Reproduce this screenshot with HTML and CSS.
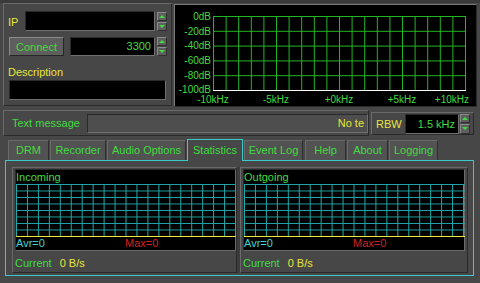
FILE: index.html
```html
<!DOCTYPE html>
<html>
<head>
<meta charset="utf-8">
<link rel="stylesheet" href="styles.css">
</head>
<body>
<div class="app">
  <div class="top">
    <div class="left">
      <div class="row r1">
        <span class="lbl yellow ip">IP</span>
        <div class="field w130"></div>
        <div class="spin"><span class="up"></span><span class="dn"></span></div>
      </div>
      <div class="row r2">
        <button class="btn">Connect</button>
        <div class="field w85 num">3300</div>
        <div class="spin"><span class="up"></span><span class="dn"></span></div>
      </div>
      <div class="lbl yellow desc">Description</div>
      <div class="field descf"></div>
    </div>
    <div class="spectrum">
      <svg width="301" height="101" viewBox="0 0 301 101">
        <defs>
          <pattern id="sg" x="38" y="11" width="12.6" height="14.8" patternUnits="userSpaceOnUse">
            <path d="M0.5 0 V14.8 M0 0.5 H12.6" stroke="#22b822" stroke-width="1" fill="none"/>
          </pattern>
        </defs>
        <rect x="38" y="11" width="252" height="74" fill="url(#sg)"/>
        <path d="M290.5 11 V85" stroke="#22b822"/>
        <path d="M38 85.5 H291" stroke="#ffffff"/>
        <g class="ylab" text-anchor="end">
          <text x="36" y="15">0dB</text>
          <text x="36" y="30">-20dB</text>
          <text x="36" y="44">-40dB</text>
          <text x="36" y="59">-60dB</text>
          <text x="36" y="74">-80dB</text>
          <text x="36" y="88">-100dB</text>
        </g>
        <g class="ylab" text-anchor="middle">
          <text x="38" y="98">-10kHz</text>
          <text x="101" y="98">-5kHz</text>
          <text x="164" y="98">+0kHz</text>
          <text x="227" y="98">+5kHz</text>
          <text x="294" y="98" text-anchor="end">+10kHz</text>
        </g>
      </svg>
    </div>
  </div>

  <div class="msgrow">
    <div class="msggroup">
      <span class="green msglbl">Text message</span>
      <div class="msgfield"><span class="yellow">No te</span></div>
    </div>
    <div class="rbwgroup">
      <span class="yellow rbwlbl">RBW</span>
      <div class="field rbwf">1.5 kHz</div>
      <div class="spin tall"><span class="up"></span><span class="dn"></span></div>
    </div>
  </div>

  <div class="tabs">
    <div class="tab t1">DRM</div>
    <div class="tab t2">Recorder</div>
    <div class="tab t3">Audio Options</div>
    <div class="tab t4 active">Statistics</div>
    <div class="tab t5">Event Log</div>
    <div class="tab t6">Help</div>
    <div class="tab t7">About</div>
    <div class="tab t8">Logging</div>
  </div>

  <div class="panel">
    <div class="group g1">
      <div class="scope">
        <div class="green cap">Incoming</div>
        <svg class="grid" width="220" height="53" viewBox="0 0 220 53">
          <defs>
            <pattern id="cg1" x="0" y="0" width="10.95" height="6.5" patternUnits="userSpaceOnUse">
              <path d="M0.5 0 V6.5 M0 0.5 H10.95" stroke="#1fa8a8" fill="none"/>
            </pattern>
          </defs>
          <rect x="0" y="0" width="220" height="52" fill="url(#cg1)"/>
          <path d="M0 52.5 H220" stroke="#e8e840"/>
        </svg>
        <div class="stat"><span class="cyan">Avr=0</span><span class="red max1">Max=0</span></div>
      </div>
      <div class="cur"><span class="green">Current</span><span class="yellow val">0 B/s</span></div>
    </div>
    <div class="sep"></div>
    <div class="group g2">
      <div class="scope">
        <div class="green cap">Outgoing</div>
        <svg class="grid" width="221" height="53" viewBox="0 0 221 53">
          <defs>
            <pattern id="cg2" x="0" y="0" width="10.95" height="6.5" patternUnits="userSpaceOnUse">
              <path d="M0.5 0 V6.5 M0 0.5 H10.95" stroke="#1fa8a8" fill="none"/>
            </pattern>
          </defs>
          <rect x="0" y="0" width="221" height="52" fill="url(#cg2)"/>
          <path d="M0 52.5 H221" stroke="#e8e840"/>
        </svg>
        <div class="stat"><span class="cyan">Avr=0</span><span class="red max2">Max=0</span></div>
      </div>
      <div class="cur"><span class="green">Current</span><span class="yellow val">0 B/s</span></div>
    </div>
  </div>
</div>
</body>
</html>
```

FILE: styles.css
```css
* { box-sizing: border-box; }
html, body { margin: 0; padding: 0; }
body {
  width: 480px;
  height: 283px;
  overflow: hidden;
  background: #474747;
  font-family: "Liberation Sans", Arial, sans-serif;
  font-size: 11px;
  color: #40dc40;
}
.app {
  width: 480px;
  height: 283px;
  border-top: 3px solid #3a3a3a;
  position: relative;
}
.green { color: #40dc40; }
.yellow { color: #e6e63c; }
.cyan { color: #40d0d0; }
.red { color: #d42020; }

/* top area */
.top {
  display: flex;
  height: 105px;
  padding: 0 3px 0 3px;
  gap: 2px;
}
.left {
  width: 169px;
  height: 103px;
  border: 1px solid;
  border-color: #6a6a6a #2a2a2a #2a2a2a #6a6a6a;
  padding: 7px 0 0 4px;
}
.row { display: flex; align-items: center; }
.r1 { height: 20px; }
.ip { width: 17px; padding-top: 2px; }
.lbl { font-size: 11px; }
.field {
  background: #000;
  border: 1px solid;
  border-color: #2a2a2a #707070 #707070 #2a2a2a;
  height: 20px;
}
.w130 { width: 130px; margin-right: 2px; }
.w85 { width: 85px; margin-right: 2px; height: 19px; }
.num {
  text-align: right;
  padding-right: 3px;
  line-height: 17px;
  font-size: 11px;
  color: #40dc40;
}
.spin {
  width: 10px;
  height: 19px;
  display: flex;
  flex-direction: column;
  gap: 1px;
}
.spin span {
  flex: 1;
  background: #5e5e5e;
  border: 1px solid;
  border-color: #8a8a8a #2e2e2e #2e2e2e #8a8a8a;
  position: relative;
}
.spin .up::after, .spin .dn::after {
  content: "";
  position: absolute;
  left: 1px;
  top: 2px;
  border-left: 3px solid transparent;
  border-right: 3px solid transparent;
}
.spin .up::after { border-bottom: 3px solid #40dc40; }
.spin .dn::after { border-top: 3px solid #40dc40; }
.spin.tall { height: 20px; }
.r2 { margin-top: 6px; height: 19px; }
.btn {
  margin: 0 6px 0 1px;
  width: 55px;
  height: 19px;
  background: #5e5e5e;
  border: 1px solid;
  border-color: #8a8a8a #262626 #262626 #8a8a8a;
  color: #40dc40;
  font-family: "Liberation Sans", Arial, sans-serif;
  font-size: 11px;
  padding: 0;
}
.desc { margin-top: 10px; height: 14px; font-size: 11px; }
.descf { width: 157px; margin: 0 0 0 1px; }

.spectrum {
  margin-top: 1px;
  width: 303px;
  height: 103px;
  background: #000;
  border: 1px solid;
  border-color: #7a7a7a #2a2a2a #2a2a2a #7a7a7a;
}
.spectrum svg { display: block; }
.ylab text {
  fill: #40dc40;
  font-family: "Liberation Sans", Arial, sans-serif;
  font-size: 10px;
}

/* message row */
.msgrow {
  display: flex;
  height: 28px;
  padding: 2px 0 0 3px;
  gap: 2px;
}
.msggroup {
  width: 366px;
  height: 26px;
  border: 1px solid;
  border-color: #6a6a6a #2a2a2a #2a2a2a #6a6a6a;
  display: flex;
  align-items: center;
  padding-left: 8px;
}
.msglbl { width: 75px; font-size: 11px; }
.msgfield {
  width: 283px;
  height: 19px;
  background: #4e4e4e;
  border: 1px solid;
  border-color: #2a2a2a #707070 #707070 #2a2a2a;
  text-align: right;
  line-height: 17px;
  padding-right: 3px;
  font-size: 11px;
  margin-top: 1px;
}
.rbwgroup {
  margin-top: 2px;
  width: 103px;
  height: 23px;
  border: 1px solid;
  border-color: #6a6a6a #2a2a2a #2a2a2a #6a6a6a;
  display: flex;
  align-items: center;
  padding-left: 4px;
}
.rbwlbl { width: 29px; font-size: 11px; }
.rbwf {
  width: 54px;
  height: 20px;
  margin-right: 1px;
  text-align: right;
  padding-right: 3px;
  line-height: 18px;
  font-size: 11px;
  color: #40dc40;
}

/* tabs */
.tabs {
  display: flex;
  align-items: flex-end;
  height: 24px;
  padding-left: 8px;
}
.tab {
  height: 20px;
  background: #525252;
  border: 1px solid;
  border-bottom: none;
  border-color: #6a6a6a #2e2e2e #2e2e2e #6a6a6a;
  color: #40dc40;
  text-align: center;
  line-height: 19px;
  font-size: 11px;
  margin-right: 1px;
}
.t1 { width: 41px; }
.t2 { width: 56px; }
.t3 { width: 79px; }
.t4 { width: 56px; }
.t5 { width: 59px; margin-left: 0; }
.t6 { width: 41px; margin-left: 1px; }
.t7 { width: 41px; }
.t8 { width: 49px; }
.tab.active {
  height: 22px;
  background: #474747;
  border: 1px solid #3cc8c8;
  border-bottom: none;
  line-height: 21px;
  position: relative;
  top: 1px;
  z-index: 2;
}

/* panel */
.panel {
  margin-left: 5px;
  width: 469px;
  height: 116px;
  border: 1px solid #3cc8c8;
  display: flex;
  padding: 6px 0 0 6px;
}
.group {
  height: 106px;
  border: 1px solid;
  border-color: #6a6a6a #2a2a2a #2a2a2a #6a6a6a;
  padding: 1px 0 0 2px;
}
.g1 { width: 225px; }
.g2 { width: 228px; }
.sep {
  width: 3px;
  height: 106px;
  background: #3c3c3c;
}
.scope {
  background: #000;
  height: 82px;
  border: 1px solid;
  border-color: #2a2a2a #6a6a6a #6a6a6a #2a2a2a;
}
.g1 .scope { width: 221px; }
.g2 .scope { width: 222px; }
.cap { height: 14px; line-height: 15px; font-size: 11px; }
.grid { display: block; }
.stat { height: 13px; line-height: 13px; font-size: 11px; position: relative; }
.max1 { position: absolute; left: 109px; }
.max2 { position: absolute; left: 109px; }
.cur { height: 22px; line-height: 24px; font-size: 11px; }
.val { margin-left: 8px; }
```
